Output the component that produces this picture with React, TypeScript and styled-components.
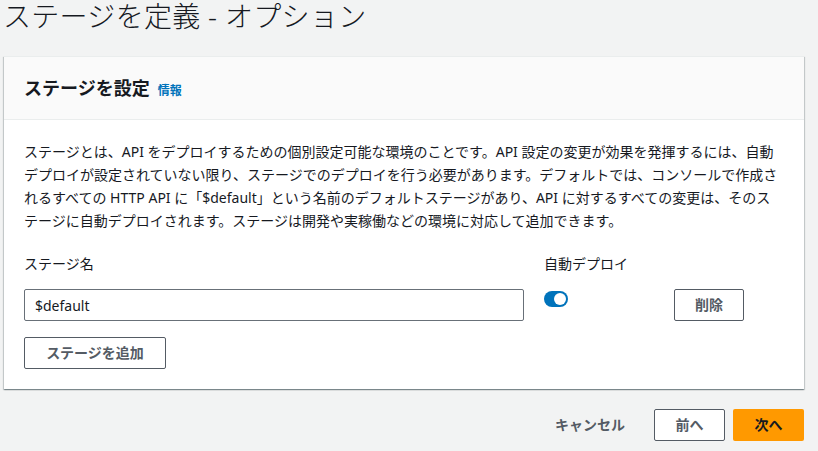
import React, { useState } from "react";
import styled, { createGlobalStyle } from "styled-components";

const GlobalStyle = createGlobalStyle`
  html, body {
    margin: 0;
    padding: 0;
    background-color: #f2f3f3;
  }
  body {
    font-family: "Noto Sans", "Noto Sans CJK JP", sans-serif;
    color: #16191f;
  }
`;

const Page = styled.div`
  width: 818px;
  height: 451px;
  overflow: hidden;
  box-sizing: border-box;
  padding: 0 14px 0 4px;
`;

const PageTitle = styled.h1`
  margin: 0 0 0 -1px;
  font-size: 28px;
  font-weight: 300;
  line-height: 32px;
  color: #16191f;
  letter-spacing: 0.3px;
`;

const Card = styled.section`
  margin-top: 24px;
  background-color: #ffffff;
  border-top: 1px solid #eaeded;
  box-shadow: 0 1px 1px 0 rgba(0, 28, 36, 0.3),
    1px 1px 1px 0 rgba(0, 28, 36, 0.15),
    -1px 1px 1px 0 rgba(0, 28, 36, 0.15);
`;

const CardHeader = styled.div`
  display: flex;
  align-items: baseline;
  gap: 8px;
  height: 63px;
  box-sizing: border-box;
  padding: 19px 20px 0 20px;
  background-color: #fafafa;
  border-bottom: 1px solid #eaeded;

  h2 {
    margin: 0;
    font-size: 18px;
    font-weight: 700;
    line-height: 24px;
  }
`;

const InfoLink = styled.a`
  font-size: 12px;
  font-weight: 700;
  color: #0073bb;
  text-decoration: none;
`;

const CardBody = styled.div`
  padding: 20px 20px 20px 20px;
`;

const Description = styled.p`
  margin: 0;
  font-size: 14px;
  line-height: 23px;
  color: #16191f;
`;

const StageGrid = styled.div`
  margin-top: 21px;
  display: grid;
  grid-template-columns: 500px 110px 70px;
  column-gap: 20px;
  row-gap: 14px;
  align-items: start;
`;

const FieldLabel = styled.div`
  font-size: 14px;
  line-height: 22px;
  color: #16191f;
`;

const TextInput = styled.input`
  width: 100%;
  height: 32px;
  box-sizing: border-box;
  padding: 0 10px;
  border: 1px solid #687078;
  border-radius: 2px;
  font-family: inherit;
  font-size: 14px;
  color: #16191f;
  background: #ffffff;
  outline: none;
`;

const Toggle = styled.button<{ $on: boolean }>`
  margin-top: 2px;
  width: 24px;
  height: 16px;
  padding: 0;
  border: none;
  border-radius: 8px;
  background-color: ${(p) => (p.$on ? "#0073bb" : "#aab7b8")};
  position: relative;
  cursor: pointer;

  &::after {
    content: "";
    position: absolute;
    top: 2px;
    left: ${(p) => (p.$on ? "10px" : "2px")};
    width: 12px;
    height: 12px;
    border-radius: 50%;
    background: #ffffff;
  }
`;

const Button = styled.button<{ $variant?: "normal" | "primary" | "link" }>`
  height: 32px;
  box-sizing: border-box;
  padding: 0 20px;
  border-radius: 2px;
  font-family: inherit;
  font-size: 14px;
  font-weight: 700;
  line-height: 30px;
  white-space: nowrap;
  cursor: pointer;
  border: 1px solid
    ${(p) =>
      p.$variant === "primary" || p.$variant === "link"
        ? "transparent"
        : "#545b64"};
  background-color: ${(p) =>
    p.$variant === "primary"
      ? "#ff9900"
      : p.$variant === "link"
      ? "transparent"
      : "#ffffff"};
  color: ${(p) => (p.$variant === "primary" ? "#16191f" : "#545b64")};
`;

const DeleteButton = styled(Button)`
  width: 70px;
  padding: 0;
`;

const AddButton = styled(Button)`
  margin-top: 16px;
  width: 142px;
  padding: 0;
`;

const Footer = styled.div`
  margin-top: 20px;
  display: flex;
  justify-content: flex-end;
  gap: 8px;
`;

const NavButton = styled(Button)`
  width: 71px;
  padding: 0;
`;

export default function App() {
  const [autoDeploy, setAutoDeploy] = useState(true);
  const [stageName, setStageName] = useState("$default");

  return (
    <>
      <GlobalStyle />
      <Page>
        <PageTitle>ステージを定義 - オプション</PageTitle>
        <Card>
          <CardHeader>
            <h2>ステージを設定</h2>
            <InfoLink href="#">情報</InfoLink>
          </CardHeader>
          <CardBody>
            <Description>
              ステージとは、API をデプロイするための個別設定可能な環境のことです。API 設定の変更が効果を発揮するには、自動デプロイが設定されていない限り、ステージでのデプロイを行う必要があります。デフォルトでは、コンソールで作成されるすべての HTTP API に「$default」という名前のデフォルトステージがあり、API に対するすべての変更は、そのステージに自動デプロイされます。ステージは開発や実稼働などの環境に対応して追加できます。
            </Description>
            <StageGrid>
              <FieldLabel>ステージ名</FieldLabel>
              <FieldLabel>自動デプロイ</FieldLabel>
              <div />
              <TextInput
                value={stageName}
                onChange={(e) => setStageName(e.target.value)}
              />
              <Toggle
                $on={autoDeploy}
                aria-label="自動デプロイ"
                onClick={() => setAutoDeploy(!autoDeploy)}
              />
              <DeleteButton>削除</DeleteButton>
            </StageGrid>
            <AddButton>ステージを追加</AddButton>
          </CardBody>
        </Card>
        <Footer>
          <Button $variant="link">キャンセル</Button>
          <NavButton>前へ</NavButton>
          <NavButton $variant="primary">次へ</NavButton>
        </Footer>
      </Page>
    </>
  );
}
